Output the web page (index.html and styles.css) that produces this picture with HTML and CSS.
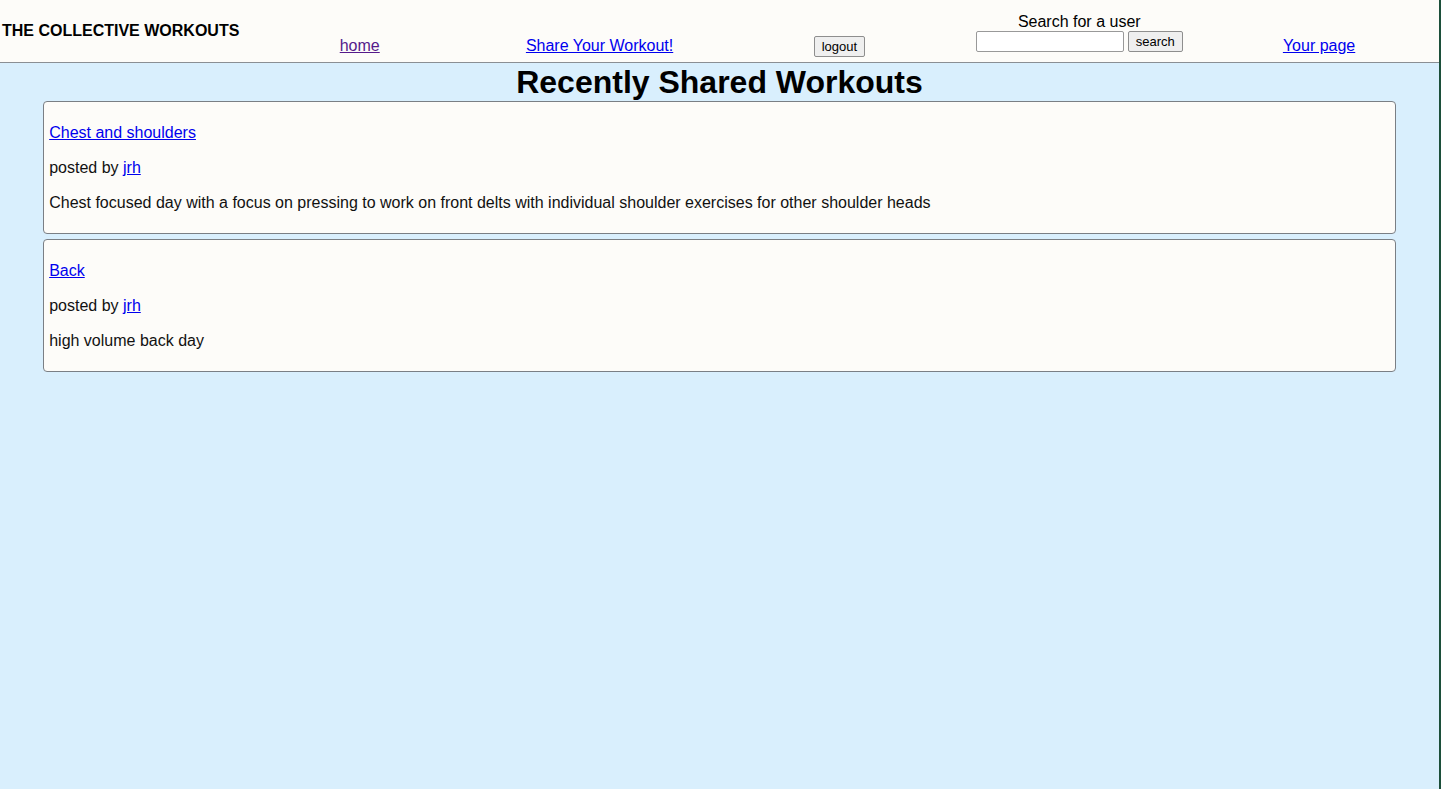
FILE: index.html
```html
<!DOCTYPE html>
<html>
<head>
<meta charset="utf-8">
<title>The Collective Workouts</title>
<link rel="stylesheet" href="styles.css">
</head>
<body>
<div class="page">
  <header class="topbar">
    <div class="brand">THE COLLECTIVE WORKOUTS</div>
    <div class="cell cell-link"><a class="visited" href="#">home</a></div>
    <div class="cell cell-link"><a href="#">Share Your Workout!</a></div>
    <div class="cell cell-logout"><button class="btn">logout</button></div>
    <div class="cell cell-search">
      <div class="search-label">Search for a user</div>
      <div class="search-row"><input class="search-input" type="text"><button class="btn">search</button></div>
    </div>
    <div class="cell cell-link"><a href="#">Your page</a></div>
  </header>
  <main class="content">
    <h1 class="title">Recently Shared Workouts</h1>
    <div class="card">
      <p><a href="#">Chest and shoulders</a></p>
      <p>posted by <a href="#">jrh</a></p>
      <p>Chest focused day with a focus on pressing to work on front delts with individual shoulder exercises for other shoulder heads</p>
    </div>
    <div class="card">
      <p><a href="#">Back</a></p>
      <p>posted by <a href="#">jrh</a></p>
      <p>high volume back day</p>
    </div>
  </main>
</div>
</body>
</html>
```
FILE: styles.css
```css
html, body {
  margin: 0;
  padding: 0;
  height: 100%;
}
body {
  background: #d9effd;
  font-family: "Liberation Sans", Arial, Helvetica, sans-serif;
  font-size: 16px;
  color: #111;
}
.page {
  min-height: 100%;
  border-right: 2px solid #1c4f3a;
  box-sizing: border-box;
}
a { color: #0000ee; }
a.visited { color: #551a8b; }

.topbar {
  display: grid;
  grid-template-columns: repeat(6, 1fr);
  height: 62px;
  background: #fdfcf9;
  border-bottom: 1px solid #8a8f94;
  align-items: end;
}
.brand {
  align-self: center;
  font-weight: bold;
  font-size: 16px;
  padding-left: 2px;
  color: #000;
  white-space: nowrap;
}
.cell { text-align: center; }
.cell-link { margin-bottom: 7px; line-height: 18px; }
.cell-logout { margin-bottom: 5px; }
.cell-search { margin-bottom: 10px; }
.search-label { line-height: 18px; margin-bottom: 0; color: #000; }
.search-row {
  display: flex;
  justify-content: center;
  gap: 4px;
}
.search-input {
  width: 148px;
  height: 21px;
  box-sizing: border-box;
  border: 1px solid #999;
  border-radius: 2px;
  background: #fff;
  padding: 0 3px;
  margin: 0;
}
.btn {
  font-family: "Liberation Sans", Arial, sans-serif;
  font-size: 13px;
  height: 21px;
  padding: 0 7px;
  margin: 0;
  background: #efefef;
  border: 1px solid #8e8e8e;
  border-radius: 2px;
  color: #000;
}

.content { padding-bottom: 20px; }
.title {
  margin: 0;
  text-align: center;
  font-size: 32px;
  line-height: 38px;
  font-weight: bold;
  color: #000;
}
.card {
  width: 94%;
  margin: 0 auto 5px;
  box-sizing: border-box;
  background: #fdfcf9;
  border: 1px solid #7a7f85;
  border-radius: 4px;
  padding: 5px 5px;
}
.card p {
  margin: 16px 0;
  line-height: 19px;
}
```
